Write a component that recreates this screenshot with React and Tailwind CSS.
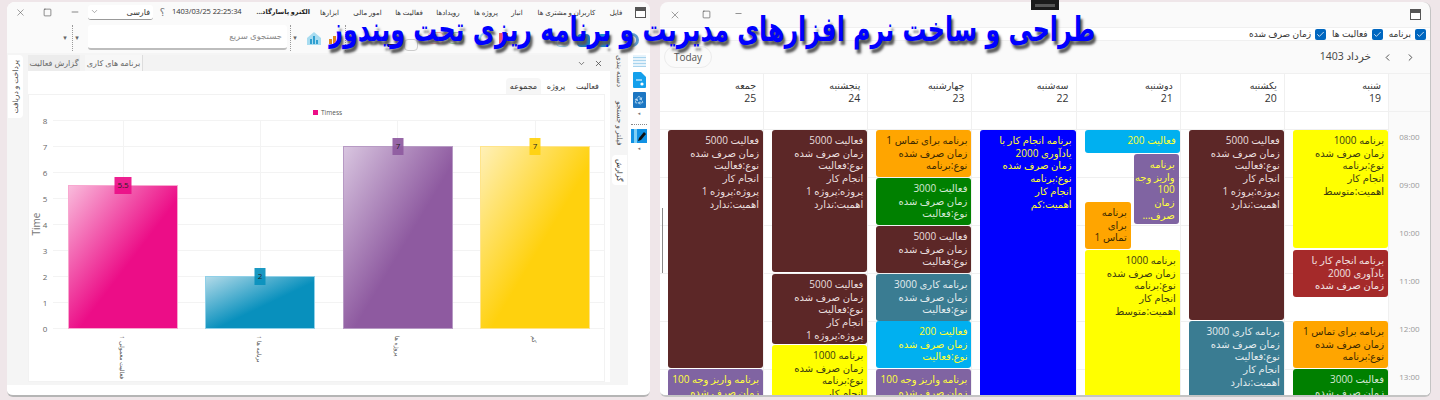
import { Check, ChevronDown, ChevronLeft, ChevronRight, Minus, Recycle, Square, X } from "lucide-react";

const MAROON = "bg-[#5c2727] text-[#e9dede]";
const YELLOW = "bg-[#ffff00] text-[#3b3b10]";
const ORANGE = "bg-[#ffa500] text-[#3d2a00]";
const GREEN = "bg-[#008000] text-[#d5e8d5]";
const TEAL = "bg-[#3a7c92] text-[#e4ecef]";
const SKY = "bg-[#00b0f0] text-[#ffff30]";
const PURPLE = "bg-[#8064a2] text-[#ffff40]";
const BLUE = "bg-[#0000ff] text-[#ffff30]";
const RED = "bg-[#a52a2a] text-[#f2e2e2]";

const activity5000 = ["فعالیت 5000", "زمان صرف شده", "نوع:فعالیت", "انجام کار", "پروژه:پروژه 1", "اهمیت:ندارد"];
const program1000 = ["برنامه 1000", "زمان صرف شده", "نوع:برنامه", "انجام کار", "اهمیت:متوسط"];
const call1 = ["برنامه برای تماس 1", "زمان صرف شده", "نوع:برنامه"];
const activity3000 = ["فعالیت 3000", "زمان صرف شده", "نوع:فعالیت"];
const deposit = ["برنامه واریز وجه 100", "زمان صرف شده"];

// top is measured from the top of the scrolling area
const days = [
  {
    name: "جمعه",
    num: 25,
    events: [
      { top: 18, h: 238, color: MAROON, lines: activity5000 },
      { top: 257, h: 60, color: PURPLE, lines: deposit },
    ],
  },
  {
    name: "پنجشنبه",
    num: 24,
    events: [
      { top: 18, h: 142, color: MAROON, lines: activity5000 },
      { top: 162, h: 70, color: MAROON, lines: activity5000.slice(0, 5) },
      { top: 233, h: 80, color: YELLOW, lines: ["برنامه 1000", "زمان صرف شده", "نوع:برنامه", "انجام کار"] },
    ],
  },
  {
    name: "چهارشنبه",
    num: 23,
    events: [
      { top: 18, h: 47, color: ORANGE, lines: call1 },
      { top: 66, h: 47, color: GREEN, lines: activity3000 },
      { top: 114, h: 47, color: MAROON, lines: ["فعالیت 5000", "زمان صرف شده", "نوع:فعالیت"] },
      { top: 162, h: 47, color: TEAL, lines: ["برنامه کاری 3000", "زمان صرف شده", "نوع:فعالیت"] },
      { top: 209, h: 47, color: SKY, lines: ["فعالیت 200", "زمان صرف شده", "نوع:فعالیت"] },
      { top: 257, h: 60, color: PURPLE, lines: deposit },
    ],
  },
  {
    name: "سه‌شنبه",
    num: 22,
    events: [
      {
        top: 18,
        h: 300,
        color: BLUE,
        lines: ["برنامه انجام کار با", "یادآوری 2000", "زمان صرف شده", "نوع:برنامه", "انجام کار", "اهمیت:کم"],
      },
    ],
  },
  {
    name: "دوشنبه",
    num: 21,
    events: [
      { top: 18, h: 23, color: SKY, lines: ["فعالیت 200"] },
      { top: 42, h: 70, left: 57, right: 1, color: PURPLE, lines: ["برنامه", "واریز وجه", "100", "زمان", "صرف..."] },
      { top: 90, h: 47, right: 49, color: ORANGE, lines: ["برنامه", "برای", "تماس 1"] },
      { top: 138, h: 180, color: YELLOW, lines: program1000 },
    ],
  },
  {
    name: "یکشنبه",
    num: 20,
    events: [
      { top: 18, h: 190, color: MAROON, lines: activity5000 },
      { top: 209, h: 110, color: TEAL, lines: ["برنامه کاری 3000", "زمان صرف شده", "نوع:فعالیت", "انجام کار", "اهمیت:ندارد"] },
    ],
  },
  {
    name: "شنبه",
    num: 19,
    events: [
      { top: 18, h: 118, color: YELLOW, lines: program1000 },
      { top: 138, h: 47, color: RED, lines: ["برنامه انجام کار با", "یادآوری 2000", "زمان صرف شده"] },
      { top: 209, h: 47, color: ORANGE, lines: call1 },
      { top: 257, h: 60, color: GREEN, lines: ["فعالیت 3000", "زمان صرف شده"] },
    ],
  },
];

const hours = ["08:00", "09:00", "10:00", "11:00", "12:00", "13:00"];

const menu = [
  { label: "ابزارها", w: "w-[21px]" },
  { label: "امور مالی", w: "w-[33px]" },
  { label: "فعالیت ها", w: "w-[28px]" },
  { label: "رویدادها", w: "w-[28px]" },
  { label: "پروژه ها", w: "w-[26px]" },
  { label: "انبار", w: "w-[14px]" },
  { label: "کاربران و مشتری ها", w: "w-[63px]" },
  { label: "فایل", w: "w-[14px]" },
];

const bars = [
  { x: 68, top: 185, fill: "url(#pink)", stroke: "#f8a8d0", box: "#ec0d87", label: "5.5", axis: "فعالیت معمولی 1", boxW: 17 },
  { x: 205, top: 276, fill: "url(#cyan)", stroke: "#8fd0e8", box: "#0890bd", label: "2", axis: "برنامه ها 1", boxW: 11 },
  { x: 343, top: 146, fill: "url(#violet)", stroke: "#b79ac4", box: "#8e5aa0", label: "7", axis: "پروژه ها", boxW: 11 },
  { x: 480, top: 146, fill: "url(#amber)", stroke: "#ffe48a", box: "#ffd10d", label: "7", axis: "کم", boxW: 11 },
];

function Gradient({ id, from, to }) {
  return (
    <linearGradient id={id} x1="0" y1="0" x2="1" y2="1">
      <stop offset="0" stopColor={from} />
      <stop offset="0.55" stopColor={to} />
      <stop offset="1" stopColor={to} />
    </linearGradient>
  );
}

function Chart() {
  return (
    <svg viewBox="28 94 577 288" className="h-[288px] w-[577px] block">
      <defs>
        <Gradient id="pink" from="#f9bcdc" to="#ec0d87" />
        <Gradient id="cyan" from="#b4dbe9" to="#0890bd" />
        <Gradient id="violet" from="#d9c6e0" to="#8e5aa0" />
        <Gradient id="amber" from="#fff0b8" to="#ffd10d" />
      </defs>
      <rect x="28.5" y="94.5" width="576" height="287" fill="#fff" stroke="#f2f2f2" />
      {[0, 1, 2, 3, 4, 5, 6, 7, 8].map((n) => (
        <g key={n}>
          <line x1="53" x2="604" y1={328.5 - n * 26} y2={328.5 - n * 26} stroke="#f3f3f3" />
          <text x="45" y={331.5 - n * 26} fontSize="8" fill="#666" textAnchor="middle">
            {n}
          </text>
        </g>
      ))}
      {[123, 260, 397, 535].map((x) => (
        <line key={x} x1={x + 0.5} x2={x + 0.5} y1="120" y2="329" stroke="#f3f3f3" />
      ))}
      <rect x="313" y="110" width="5" height="5" fill="#ec0d87" />
      <text x="321" y="115" fontSize="6.5" fill="#555">
        Timess
      </text>
      <text transform="translate(40 224) rotate(-90)" fontSize="10" fill="#777" textAnchor="middle">
        Time
      </text>
      {bars.map((b) => (
        <g key={b.x}>
          <rect x={b.x + 0.5} y={b.top + 0.5} width="109" height={328 - b.top} fill={b.fill} stroke={b.stroke} />
          <rect x={b.x + 55 - b.boxW / 2} y={b.top - 8} width={b.boxW} height="17" fill={b.box} opacity="0.92" />
          <text x={b.x + 55} y={b.top + 3} fontSize="8" fill="#222" textAnchor="middle">
            {b.label}
          </text>
          <text
            transform={`translate(${b.x + 52} 336) rotate(90)`}
            fontSize="6"
            fill="#555"
            direction="rtl"
            textAnchor="end"
          >
            {b.axis}
          </text>
        </g>
      ))}
    </svg>
  );
}

function Grip() {
  return <div className="h-[26px] border-l border-dotted border-[#9a9a9a]" />;
}

function SmallArrow() {
  return <span className="w-[8px] text-center text-[7px] leading-none text-[#666]">▾</span>;
}

function ToolbarIcons() {
  return (
    <div className="flex h-[31px] flex-1 items-center">
      <svg viewBox="0 0 16 16" className="ml-[7px] h-[16px] w-[16px]">
        <path d="M1 8 8 2l7 6v7H1z" fill="#a8dcf0" />
        <path d="M4 14V9h2v5zm3 0V6h2v8zm3 0v-4h2v4z" fill="#2f9fd0" />
      </svg>
      <svg viewBox="0 0 14 14" className="ml-[6px] h-[14px] w-[14px]">
        <path d="M1 13V8h3v5zm4 0V5h3v8zm4 0V2h3v11z" fill="#e08a1e" />
      </svg>
      <div className="ml-[3px]">
        <Grip />
      </div>
      <div className="ml-[42px] mt-[16px] h-[3px] w-[12px] bg-[#222]" />
      <div className="ml-[4px] mt-[14px] h-[12px] w-[14px] rounded-sm border border-[#ccc]" />
      <div className="ml-[10px] h-[12px] w-[16px] rounded-sm border border-[#f0a0a0] bg-[#fde8e8]" />
      <div className="ml-[4px] h-[12px] w-[16px] rounded-sm border border-[#a0d0a0] bg-[#e8f5e8]" />
      <div className="ml-[15px] mt-[2px] h-[14px] w-[14px] rounded-full border-2 border-[#9cd4ee]" />
      <div className="ml-[6px] mt-[4px] h-[14px] w-[9px] rounded-b-sm bg-[#e85a6a]" />
      <div className="ml-[48px] mt-[6px] h-[13px] w-[13px] rounded-sm border border-[#9cd4ee] bg-[#e6f5fc]" />
      <div className="ml-[8px] mt-[6px] h-[13px] w-[13px] rounded-sm bg-[#1a7fc8]" />
      <div className="ml-[7px] mt-[6px] h-[13px] w-[13px] rounded-sm bg-[#1a8fd8]" />
      <div className="ml-[15px] mt-[4px] h-[14px] w-[14px] rounded-full border-[3px] border-[#5b9bd0]" />
    </div>
  );
}

function SideIcons() {
  return (
    <div className="flex w-[22px] flex-col items-center bg-white pt-[1px]">
      <svg viewBox="0 0 15 14" className="h-[14px] w-[15px]">
        <path d="M1 1h13v12H1z" fill="#e6f3fb" />
        <path d="M1 3.5h13M1 6.5h13M1 9.5h13M1 12.5h13" stroke="#a8d4ee" />
      </svg>
      <svg viewBox="0 0 14 16" className="mt-[4px] h-[16px] w-[14px]">
        <path d="M1 1a1 1 0 0 1 1-1h7l5 5v10a1 1 0 0 1-1 1H2a1 1 0 0 1-1-1z" fill="#14a0ec" />
        <path d="M4 8h6" stroke="#fff" />
        <circle cx="10" cy="12" r="1.6" fill="#fff" />
      </svg>
      <div className="mt-[4px] flex h-[16px] w-[13px] items-center justify-center rounded-[1px] bg-[#1c76c2]">
        <Recycle size={10} strokeWidth={1.8} color="#dff4ff" />
      </div>
      <span className="mt-[1px] text-[5px] leading-[8px] text-[#777]">◂</span>
      <div className="mt-[7px] w-[16px] border-t border-dotted border-[#888]" />
      <svg viewBox="0 0 16 14" className="mt-[4px] h-[14px] w-[16px]">
        <path d="M0 0h16v14H0z" fill="#1292e4" />
        <path d="M3 0h3v14H3z" fill="#7fd0f6" />
        <path d="m7 12 1-3 5-6 2 2-5 6z" fill="#111" />
      </svg>
      <span className="mt-[1px] text-[5px] leading-[8px] text-[#777]">◂</span>
    </div>
  );
}

function AppWindow() {
  return (
    <div className="flex h-full w-[643px] flex-col overflow-hidden rounded-t-lg rounded-b-md border-b-2 border-[#b5b5b5] bg-white">
      <div className="flex h-[20px] items-center bg-[#fafafa] text-[9px] leading-none text-[#333]">
        <div className="flex w-[27px] justify-center">
          <X size={11} strokeWidth={1.2} color="#555" />
        </div>
        <div className="flex w-[27px] justify-center">
          <Square size={9} strokeWidth={1.6} color="#444" />
        </div>
        <div className="flex w-[27px] justify-center">
          <Minus size={10} strokeWidth={1.4} color="#333" />
        </div>
        <div className="flex h-[15px] w-[65px] items-center justify-between rounded-[3px] border-b border-[#999] bg-white px-[2px]" dir="ltr">
          <ChevronDown size={9} strokeWidth={1.4} color="#666" />
          <span className="pr-[1px] text-[8px]">فارسی</span>
        </div>
        <span className="w-[19px] text-center text-[10px] text-[#777]">؟</span>
        <span className="w-[72px] whitespace-nowrap text-[7.5px] tracking-[-0.1px]">1403/03/25 22:25:34</span>
        <span className="ml-[12px] w-[54px] whitespace-nowrap text-[6.5px] font-bold text-[#222]" dir="rtl">
          الکترو پاسارگاد...
        </span>
        <div className="ml-[9px] flex flex-1 gap-[11px]">
          {menu.map((m) => (
            <span key={m.label} className={`${m.w} whitespace-nowrap text-center text-[7px]`} dir="rtl">
              {m.label}
            </span>
          ))}
        </div>
        <WindowGlyph />
      </div>
      <div className="flex h-[31px] items-center bg-[#fafafa]">
        <div className="w-[54px]" />
        <SmallArrow />
        <div className="ml-[3px]">
          <Grip />
        </div>
        <SmallArrow />
        <div
          className="ml-[7px] flex h-[25px] w-[199px] items-center justify-start rounded-[3px] border-b-2 border-[#bdbdbd] bg-white pr-[5px] text-[8.5px] text-[#8a8a8a]"
          dir="rtl"
        >
          <span>جستجوی سریع</span>
        </div>
        <div className="ml-[3px]">
          <Grip />
        </div>
        <SmallArrow />
        <ToolbarIcons />
      </div>
      <div className="flex h-[332px] flex-none">
        <div className="flex w-[21px] flex-col bg-[#f5f5f5] pl-[1px] pt-[2px]">
          <div className="flex h-[63px] w-[15px] items-center justify-center rounded-r bg-white">
            <span className="whitespace-nowrap text-[7.5px] text-[#444] [writing-mode:vertical-rl] rotate-180">
              پرداخت و دریافت
            </span>
          </div>
        </div>
        <div className="flex w-[582px] flex-col bg-[#f5f5f5]">
          <div className="mt-[2px] flex h-[16px] items-center bg-[#f3f3f3] text-[8px] text-[#666]">
            <span className="flex h-full w-[52px] items-center justify-center bg-[#ececec] whitespace-nowrap">گزارش فعالیت</span>
            <span className="ml-[5px] flex h-full w-[58px] items-center justify-center border-r border-[#ddd] bg-[#f7f7f7] whitespace-nowrap">
              برنامه های کاری
            </span>
            <div className="flex flex-1 items-center justify-end gap-[8px] pr-[7px]">
              <ChevronDown size={9} color="#555" />
              <X size={9} color="#444" />
            </div>
          </div>
          <div className="flex h-[23px] items-end justify-end gap-[5px] bg-white pr-[9px] text-[8px] text-[#333]">
            <span className="flex h-[16px] w-[35px] items-center justify-center rounded-t bg-[#f6f6f6]">مجموعه</span>
            <span className="flex h-[16px] w-[20px] items-center justify-center">پروژه</span>
            <span className="ml-[3px] flex h-[16px] w-[27px] items-center justify-center">فعالیت</span>
          </div>
          <div className="bg-white">
            <Chart />
          </div>
        </div>
        <div className="flex w-[18px] flex-col items-center bg-[#f5f5f5] pt-[2px] text-[7.5px] text-[#555]">
          <span className="h-[38px] whitespace-nowrap [writing-mode:vertical-rl]">دسته بندی</span>
          <span className="mt-[8px] h-[50px] whitespace-nowrap [writing-mode:vertical-rl]">فیلتر و جستجو</span>
          <div className="mt-[4px] flex h-[30px] w-[15px] items-center justify-center rounded-l bg-white text-[#333]">
            <span className="whitespace-nowrap [writing-mode:vertical-rl]">گزارش</span>
          </div>
        </div>
        <SideIcons />
      </div>
    </div>
  );
}

function WindowGlyph() {
  return (
    <div className="mr-[4px] h-[11px] w-[11px] border border-[#555] bg-white">
      <div className="h-[3px] bg-[#555]" />
    </div>
  );
}

function Legend({ label }) {
  return (
    <div className="flex items-center gap-[4px]">
      <span className="flex h-[11px] w-[11px] items-center justify-center rounded-[2px] bg-[#0067c0]">
        <Check size={9} strokeWidth={2} color="#fff" />
      </span>
      <span className="whitespace-nowrap">{label}</span>
    </div>
  );
}

function Event({ e }) {
  const left = e.left ?? 8;
  const right = e.right ?? 0;
  return (
    <div
      className={`absolute overflow-hidden rounded-[3px] pr-[4px] pt-[4px] text-right text-[10px] leading-[12.7px] ${e.color}`}
      style={{ top: e.top, height: e.h, left, right }}
      dir="rtl"
    >
      {e.lines.map((line, i) => (
        <div key={i} className="whitespace-nowrap">
          {line}
        </div>
      ))}
    </div>
  );
}

function DayColumn({ day }) {
  return (
    <div className="relative flex-1 border-r border-[#f0f0f0]">
      <div className="h-[18px] border-b border-[#f0f0f0]" />
      {hours.map((h) => (
        <div key={h} className="h-[48px] border-b border-[#f0f0f0]" />
      ))}
      {day.events.map((e, i) => (
        <Event key={i} e={e} />
      ))}
    </div>
  );
}

function CalendarWindow() {
  return (
    <div className="relative flex h-full w-[771px] flex-col overflow-hidden rounded-t-lg rounded-b-md border-b-2 border-r border-[#c4c4c4] bg-[#fafafa] text-[#333]">
      <div className="flex h-[25px] items-center">
        <div className="flex w-[28px] justify-center pl-[2px]">
          <X size={12} strokeWidth={1.1} color="#555" />
        </div>
        <div className="ml-[4px] flex w-[28px] justify-center">
          <Square size={9} strokeWidth={1.6} color="#444" />
        </div>
        <div className="ml-[4px] flex w-[28px] justify-center pb-[2px]">
          <Minus size={9} strokeWidth={1.5} color="#444" />
        </div>
        <div className="flex-1" />
        <div className="mr-[5px]">
          <WindowGlyph />
        </div>
      </div>
      <div className="flex h-[14px] items-center justify-start gap-[6px] border-y border-[#f0f0f0] bg-white pr-[4px] text-[9px]" dir="rtl">
        <Legend label="برنامه" />
        <Legend label="فعالیت ها" />
        <Legend label="زمان صرف شده" />
      </div>
      <div className="flex h-[32px] items-center justify-between" dir="ltr">
        <button className="ml-[4px] flex h-[22px] w-[48px] items-center justify-center rounded-full border border-[#ececec] text-[10px] text-[#555]">
          Today
        </button>
        <div className="flex items-center">
          <span className="text-[10.5px] text-[#444]" dir="rtl">
            خرداد 1403
          </span>
          <ChevronLeft size={11} className="ml-[11px]" color="#444" />
          <ChevronRight size={11} className="ml-[12px] mr-[14px]" color="#444" />
        </div>
      </div>
      <div className="flex h-[39px] border-y border-[#f0f0f0] bg-white">
        {days.map((d) => (
          <div key={d.num} className="flex-1 border-r border-[#f0f0f0] pr-[7px] pt-[6px] text-right text-[9.5px] leading-[12px]">
            <div dir="rtl">{d.name}</div>
            <div className="text-[10.5px]">{d.num}</div>
          </div>
        ))}
        <div className="w-[41px] bg-[#fafafa]" />
      </div>
      <div className="flex min-h-0 flex-1 overflow-hidden bg-white">
        {days.map((d) => (
          <DayColumn key={d.num} day={d} />
        ))}
        <div className="w-[41px] flex-none bg-[#fafafa] text-center text-[8px] leading-[11px] text-[#999]">
          <div className="h-[18px]" />
          {hours.map((h) => (
            <div key={h} className="h-[48px] pt-[1px]">
              {h}
            </div>
          ))}
        </div>
      </div>
      <div className="absolute left-[2px] top-[206px] h-[65px] w-[1px] bg-[#888]" />
    </div>
  );
}

export default function App() {
  return (
    <div className="relative h-[400px] w-[1440px] overflow-hidden bg-[#efe6e9] font-['Open_Sans','DejaVu_Sans',sans-serif]">
      <div className="flex h-full gap-[10px] pb-[3px] pl-[7px] pt-[2px]">
        <AppWindow />
        <CalendarWindow />
      </div>
      <div className="absolute left-[1031px] top-0 flex h-[10px] w-[28px] items-center justify-center bg-[#1a1a1a]">
        <div className="h-[3px] w-[20px] bg-[#555]" />
      </div>
      <div
        className="absolute right-[345px] top-[4px] origin-right scale-x-[0.7] whitespace-nowrap font-['DejaVu_Sans',sans-serif] text-[34px] font-bold leading-[50px] text-[#0000ff] [text-shadow:3px_4px_3px_#555]"
        dir="rtl"
      >
        طراحی و ساخت نرم افزارهای مدیریت و برنامه ریزی تحت ویندوز
      </div>
    </div>
  );
}
